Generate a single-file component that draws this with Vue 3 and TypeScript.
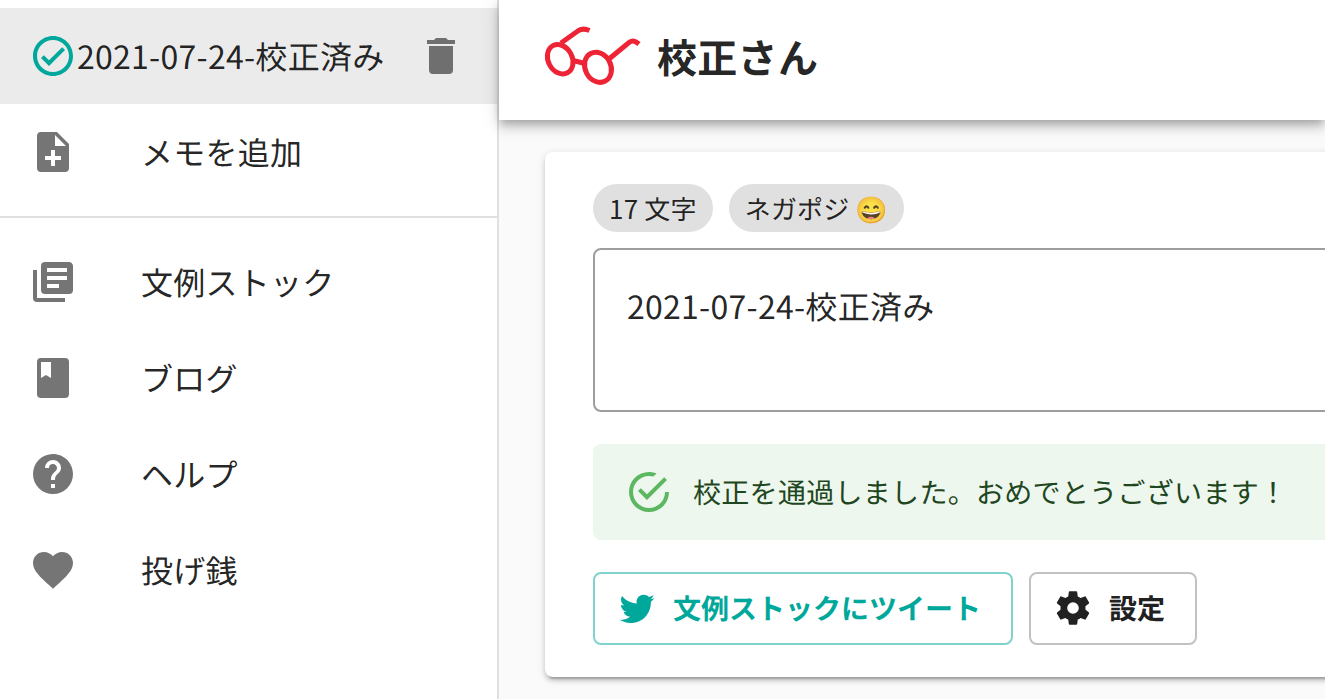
<script setup lang="ts">
interface NavItem {
  label: string;
  icon: string;
}

const icons = {
  check:
    'M12 2C6.5 2 2 6.5 2 12S6.5 22 12 22 22 17.5 22 12 17.5 2 12 2M12 20C7.59 20 4 16.41 4 12S7.59 4 12 4 20 7.59 20 12 16.41 20 12 20M16.59 7.58L10 14.17L7.41 11.59L6 13L10 17L18 9L16.59 7.58Z',
  trash:
    'M19,4H15.5L14.5,3H9.5L8.5,4H5V6H19V4M6,19A2,2 0 0,0 8,21H16A2,2 0 0,0 18,19V7H6V19Z',
  filePlus:
    'M14 2H6A2 2 0 0 0 4 4V20A2 2 0 0 0 6 22H18A2 2 0 0 0 20 20V8L14 2M13 3.5L18.5 9H13V3.5M11 11V14H8V16H11V19H13V16H16V14H13V11H11Z',
  stack:
    'M19,11H9V9H19V11M15,15H9V13H15V15M19,7H9V5H19V7M20,2H8A2,2 0 0,0 6,4V16A2,2 0 0,0 8,18H20A2,2 0 0,0 22,16V4C22,2.89 21.1,2 20,2M4,6H2V20A2,2 0 0,0 4,22H18V20H4V6Z',
  book:
    'M18,2H6A2,2 0 0,0 4,4V20A2,2 0 0,0 6,22H18A2,2 0 0,0 20,20V4A2,2 0 0,0 18,2M6,4H11V12L8.5,10.5L6,12V4Z',
  help:
    'M15.07,11.25L14.17,12.17C13.45,12.89 13,13.5 13,15H11V14.5C11,13.39 11.45,12.39 12.17,11.67L13.41,10.41C13.78,10.05 14,9.55 14,9C14,7.89 13.1,7 12,7A2,2 0 0,0 10,9H8A4,4 0 0,1 12,5A4,4 0 0,1 16,9C16,9.88 15.64,10.67 15.07,11.25M13,19H11V17H13M12,2A10,10 0 0,0 2,12A10,10 0 0,0 12,22A10,10 0 0,0 22,12C22,6.47 17.5,2 12,2Z',
  heart:
    'M12,21.35L10.55,20.03C5.4,15.36 2,12.27 2,8.5C2,5.41 4.42,3 7.5,3C9.24,3 10.91,3.81 12,5.08C13.09,3.81 14.76,3 16.5,3C19.58,3 22,5.41 22,8.5C22,12.27 18.6,15.36 13.45,20.03L12,21.35Z',
  passed:
    'M20,12A8,8 0 0,1 12,20A8,8 0 0,1 4,12A8,8 0 0,1 12,4C12.76,4 13.5,4.11 14.2,4.31L15.77,2.74C14.61,2.26 13.34,2 12,2A10,10 0 0,0 2,12A10,10 0 0,0 12,22A10,10 0 0,0 22,12M7.91,10.08L6.5,11.5L11,16L21,6L19.59,4.58L11,13.17L7.91,10.08Z',
  twitter:
    'M22.46,6C21.69,6.35 20.86,6.58 20,6.69C20.88,6.16 21.56,5.32 21.88,4.31C21.05,4.81 20.13,5.16 19.16,5.36C18.37,4.5 17.26,4 16,4C13.65,4 11.73,5.92 11.73,8.29C11.73,8.63 11.77,8.96 11.84,9.27C8.28,9.09 5.11,7.38 3,4.79C2.63,5.42 2.42,6.16 2.42,6.94C2.42,8.43 3.17,9.75 4.33,10.5C3.62,10.5 2.96,10.3 2.38,10C2.38,10 2.38,10 2.38,10.03C2.38,12.11 3.86,13.85 5.82,14.24C5.46,14.34 5.08,14.39 4.69,14.39C4.42,14.39 4.15,14.36 3.89,14.31C4.43,16 6,17.26 7.89,17.29C6.43,18.45 4.58,19.13 2.56,19.13C2.22,19.13 1.88,19.11 1.54,19.07C3.44,20.29 5.7,21 8.12,21C16,21 20.33,14.46 20.33,8.79C20.33,8.6 20.33,8.42 20.32,8.23C21.16,7.63 21.88,6.87 22.46,6Z',
  cog:
    'M12,15.5A3.5,3.5 0 0,1 8.5,12A3.5,3.5 0 0,1 12,8.5A3.5,3.5 0 0,1 15.5,12A3.5,3.5 0 0,1 12,15.5M19.43,12.97C19.47,12.65 19.5,12.33 19.5,12C19.5,11.67 19.47,11.34 19.43,11L21.54,9.37C21.73,9.22 21.78,8.95 21.66,8.73L19.66,5.27C19.54,5.05 19.27,4.96 19.05,5.05L16.56,6.05C16.04,5.66 15.5,5.32 14.87,5.07L14.5,2.42C14.46,2.18 14.25,2 14,2H10C9.75,2 9.54,2.18 9.5,2.42L9.13,5.07C8.5,5.32 7.96,5.66 7.44,6.05L4.95,5.05C4.73,4.96 4.46,5.05 4.34,5.27L2.34,8.73C2.21,8.95 2.27,9.22 2.46,9.37L4.57,11C4.53,11.34 4.5,11.67 4.5,12C4.5,12.33 4.53,12.65 4.57,12.97L2.46,14.63C2.27,14.78 2.21,15.05 2.34,15.27L4.34,18.73C4.46,18.95 4.73,19.03 4.95,18.95L7.44,17.94C7.96,18.34 8.5,18.68 9.13,18.93L9.5,21.58C9.54,21.82 9.75,22 10,22H14C14.25,22 14.46,21.82 14.5,21.58L14.87,18.93C15.5,18.67 16.04,18.34 16.56,17.94L19.05,18.95C19.27,19.03 19.54,18.95 19.66,18.73L21.66,15.27C21.78,15.05 21.73,14.78 21.54,14.63L19.43,12.97Z',
};

const links: NavItem[] = [
  { label: '文例ストック', icon: icons.stack },
  { label: 'ブログ', icon: icons.book },
  { label: 'ヘルプ', icon: icons.help },
  { label: '投げ銭', icon: icons.heart },
];

const memoTitle = '2021-07-24-校正済み';
</script>

<template>
  <div class="app">
    <aside class="drawer">
      <div class="memo active">
        <svg class="icon teal" viewBox="0 0 24 24"><path :d="icons.check" /></svg>
        <span class="memo-title">{{ memoTitle }}</span>
        <svg class="icon trash" viewBox="0 0 24 24"><path :d="icons.trash" /></svg>
      </div>
      <div class="row">
        <svg class="icon" viewBox="0 0 24 24"><path fill-rule="evenodd" :d="icons.filePlus" /></svg>
        <span class="label">メモを追加</span>
      </div>
      <hr class="divider" />
      <nav class="links">
        <div v-for="link in links" :key="link.label" class="row">
          <svg class="icon" viewBox="0 0 24 24"><path :d="link.icon" /></svg>
          <span class="label">{{ link.label }}</span>
        </div>
      </nav>
    </aside>

    <div class="content">
      <header class="topbar">
        <svg class="logo" viewBox="0 0 115 80" fill="none">
          <ellipse cx="25.2" cy="44.2" rx="12" ry="15.4" transform="rotate(-28 25.2 44.2)" />
          <ellipse cx="63" cy="52.3" rx="12.8" ry="15.6" transform="rotate(-28 63 52.3)" />
          <path d="M38 45.5L48 48" />
          <path d="M26 28L43.5 15.5C47 13.5 50 13.5 54.5 15.5" />
          <path d="M74 44L94 27.5C97 25.5 99 25 104 29" />
        </svg>
        <h1 class="title">校正さん</h1>
      </header>

      <main class="main">
        <section class="card">
          <div class="chips">
            <span class="chip">17 文字</span>
            <span class="chip">ネガポジ 😄</span>
          </div>
          <div class="field">{{ memoTitle }}</div>
          <div class="alert">
            <svg class="alert-icon" viewBox="0 0 24 24"><path :d="icons.passed" /></svg>
            <span>校正を通過しました。おめでとうございます！</span>
          </div>
          <div class="actions">
            <button class="btn tweet" type="button">
              <svg viewBox="0 0 24 24"><path :d="icons.twitter" /></svg>
              文例ストックにツイート
            </button>
            <button class="btn settings" type="button">
              <svg viewBox="0 0 24 24"><path :d="icons.cog" /></svg>
              設定
            </button>
          </div>
        </section>
      </main>
    </div>
  </div>
</template>

<style>
html,
body {
  margin: 0;
  overflow: hidden;
}
</style>

<style scoped>
.app {
  display: flex;
  height: 699px;
  overflow: hidden;
  background: #fafafa;
  color: rgba(0, 0, 0, 0.87);
  font-family: 'Noto Sans CJK JP', 'Noto Sans', sans-serif;
  font-size: 32px;
  text-rendering: geometricPrecision;
}

.drawer {
  flex: 0 0 497px;
  padding-top: 8px;
  background: #fff;
  border-right: 2px solid #e0e0e0;
}

.memo,
.row {
  display: flex;
  align-items: center;
  height: 96px;
  padding-left: 29px;
}

.active {
  background: #ebebeb;
}

.icon {
  flex: none;
  width: 48px;
  height: 48px;
  fill: #757575;
}

.icon.teal {
  fill: #00a89b;
}

.icon.trash {
  margin-left: 33px;
  fill: #6f6f6f;
}

.memo-title,
.label,
.field {
  letter-spacing: 0.27px;
}

.label {
  margin-left: 64px;
}

.divider {
  height: 2px;
  margin: 16px 0;
  border: 0;
  background: #e0e0e0;
}

.links {
  margin-top: 1px;
}

.content {
  flex: 1;
  min-width: 0;
}

.topbar {
  position: relative;
  display: flex;
  align-items: center;
  height: 120px;
  padding-left: 36px;
  background: #fff;
  box-shadow: 0 4px 8px -2px rgba(0, 0, 0, 0.2), 0 8px 10px 0 rgba(0, 0, 0, 0.14), 0 2px 20px 0 rgba(0, 0, 0, 0.12);
}

.logo {
  width: 115px;
  height: 80px;
  margin-bottom: 10px;
  stroke: #ee2436;
  stroke-width: 5;
  stroke-linecap: butt;
}

.title {
  margin: 0 0 8px 7px;
  font-size: 40px;
  font-weight: 700;
  letter-spacing: 0.3px;
  line-height: 1;
}

.main {
  padding: 32px 0 0 46px;
}

.card {
  width: 1000px;
  height: 525px;
  box-sizing: border-box;
  padding: 32px 48px;
  background: #fff;
  border-radius: 8px;
  box-shadow: 0 6px 2px -4px rgba(0, 0, 0, 0.2), 0 4px 4px 0 rgba(0, 0, 0, 0.14), 0 2px 10px 0 rgba(0, 0, 0, 0.12);
}

.chips {
  display: flex;
  gap: 16px;
}

.chip {
  display: inline-flex;
  align-items: center;
  height: 48px;
  padding: 0 16px;
  background: #e0e0e0;
  border-radius: 24px;
  font-size: 26px;
  letter-spacing: 0.2px;
  white-space: nowrap;
}

.field {
  height: 164px;
  box-sizing: border-box;
  margin-top: 16px;
  padding: 32px;
  border: 2px solid #9e9e9e;
  border-radius: 8px;
  line-height: 48px;
}

.alert {
  display: flex;
  align-items: center;
  height: 96px;
  margin-top: 32px;
  padding-left: 32px;
  background: #edf7ee;
  border-radius: 8px;
  color: #1e4620;
  font-size: 28px;
  letter-spacing: 0.3px;
  white-space: nowrap;
}

.alert-icon {
  width: 48px;
  height: 48px;
  margin-right: 20px;
  fill: #5cb860;
}

.actions {
  display: flex;
  gap: 16px;
  margin-top: 32px;
}

.btn {
  display: inline-flex;
  align-items: center;
  height: 73px;
  box-sizing: border-box;
  padding-bottom: 2px;
  background: #fff;
  border: 2px solid;
  border-radius: 8px;
  font-family: inherit;
  font-size: 28px;
  font-weight: 700;
  text-rendering: inherit;
}

.btn svg {
  flex: none;
  width: 40px;
  height: 40px;
  fill: currentColor;
}

.tweet {
  gap: 16px;
  padding-left: 22px;
  padding-right: 30px;
  border-color: #7fd3cc;
  color: #00a89b;
}

.settings {
  gap: 16px;
  padding-left: 22px;
  padding-right: 30px;
  border-color: #c2c2c2;
  color: #212121;
}
</style>
